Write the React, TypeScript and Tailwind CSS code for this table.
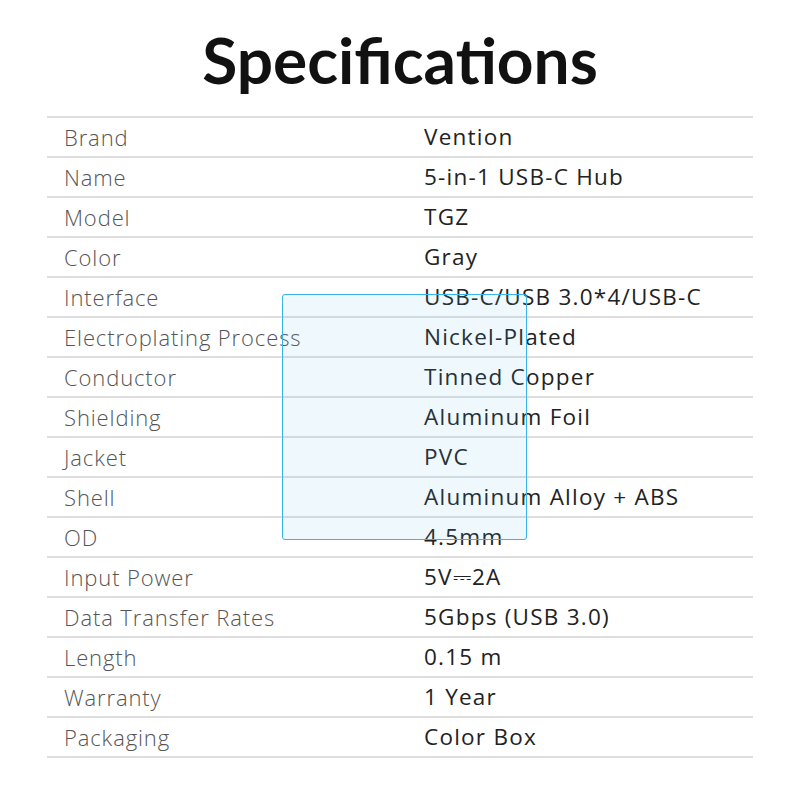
import React from "react";

const rows: [string, string][] = [
  ["Brand", "Vention"],
  ["Name", "5-in-1 USB-C Hub"],
  ["Model", "TGZ"],
  ["Color", "Gray"],
  ["Interface", "USB-C/USB 3.0*4/USB-C"],
  ["Electroplating Process", "Nickel-Plated"],
  ["Conductor", "Tinned Copper"],
  ["Shielding", "Aluminum Foil"],
  ["Jacket", "PVC"],
  ["Shell", "Aluminum Alloy + ABS"],
  ["OD", "4.5mm"],
  ["Input Power", "5V⎓2A"],
  ["Data Transfer Rates", "5Gbps (USB 3.0)"],
  ["Length", "0.15 m"],
  ["Warranty", "1 Year"],
  ["Packaging", "Color Box"],
];

export default function App() {
  return (
    <div className="relative w-[800px] h-[800px] bg-white overflow-hidden">
      <h1
        className="text-center text-[64px] font-bold text-[#111] leading-none pt-[28px] h-[116px]"
        style={{ fontFamily: "Lato, sans-serif" }}
      >
        Specifications
      </h1>
      <div className="mx-[47px] border-t-2 border-[#dedede]" style={{ fontFamily: "'Open Sans', sans-serif" }}>
        {rows.map(([k, v]) => (
          <div key={k} className="flex items-center h-[40px] border-b-2 border-[#dedede]">
            <div className="w-[377px] pl-[17px] text-[22px] font-light text-[#555] tracking-[0.04em] whitespace-nowrap">{k}</div>
            <div className="text-[22.5px] font-medium text-[#222] tracking-[0.055em] whitespace-nowrap">{v}</div>
          </div>
        ))}
      </div>
      <div className="absolute left-[282px] top-[294px] w-[245px] h-[246px] border-[1.5px] border-[#38b4ea] bg-[#5ab8ec]/[0.1] rounded-[3px]" />
    </div>
  );
}
